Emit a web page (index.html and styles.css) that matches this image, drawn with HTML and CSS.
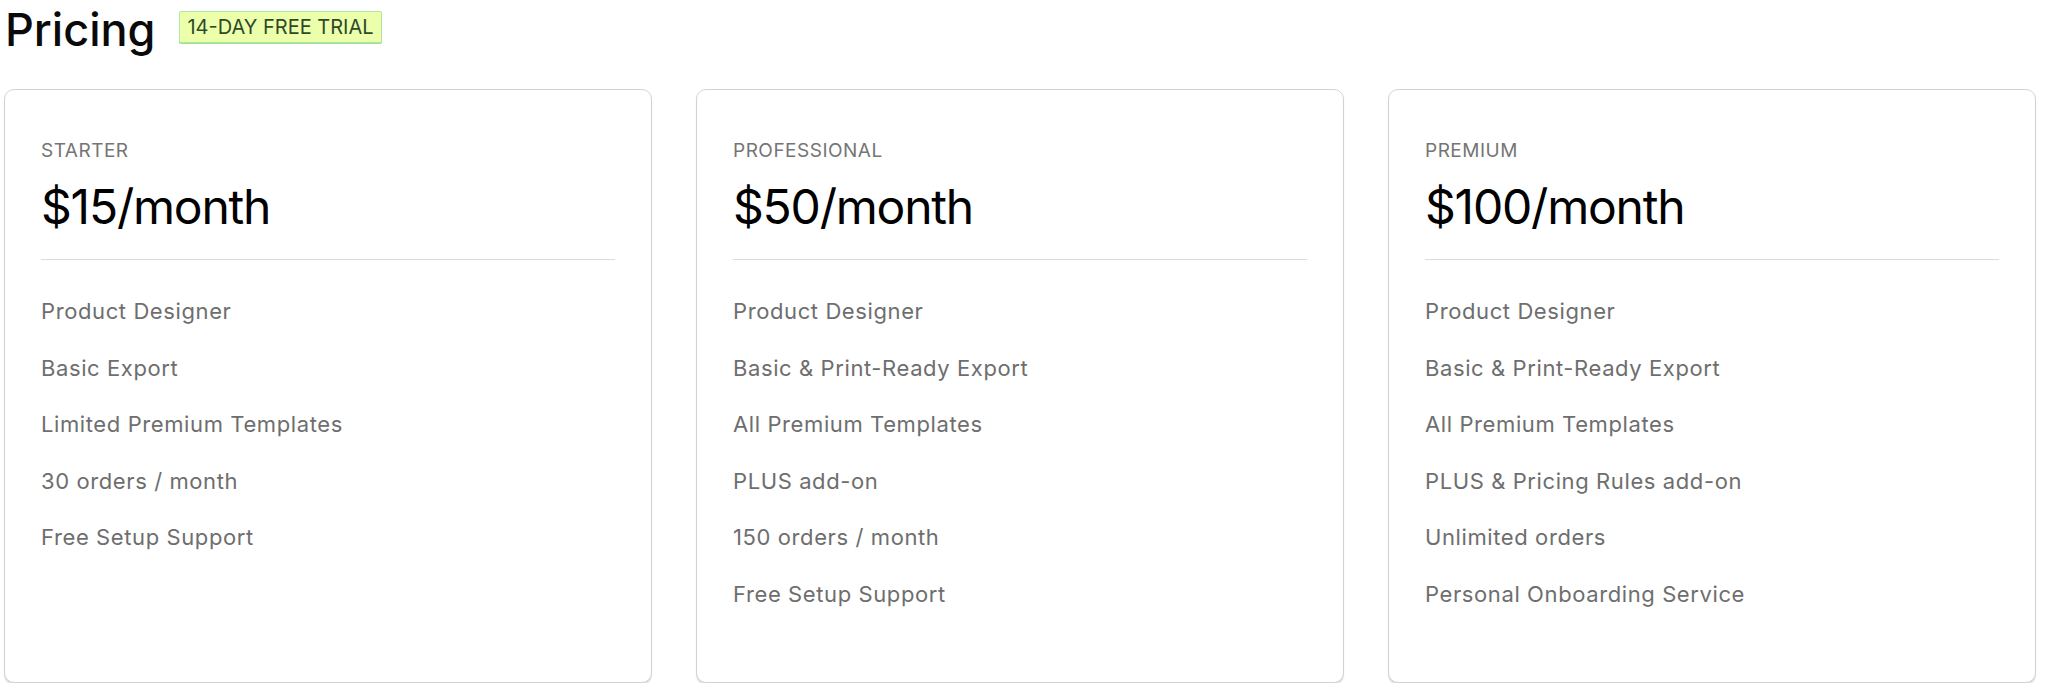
FILE: index.html
```html
<!DOCTYPE html>
<html>
<head>
<meta charset="utf-8">
<link rel="stylesheet" href="styles.css">
</head>
<body>
<div class="page">
  <div class="header">
    <h1 class="title">Pricing</h1>
    <span class="badge">14-DAY FREE TRIAL</span>
  </div>
  <div class="plans">
    <div class="card">
      <div class="plan-name">STARTER</div>
      <div class="price">$15/month</div>
      <hr class="divider">
      <ul class="features">
        <li>Product Designer</li>
        <li>Basic Export</li>
        <li>Limited Premium Templates</li>
        <li>30 orders / month</li>
        <li>Free Setup Support</li>
      </ul>
    </div>
    <div class="card">
      <div class="plan-name">PROFESSIONAL</div>
      <div class="price">$50/month</div>
      <hr class="divider">
      <ul class="features">
        <li>Product Designer</li>
        <li>Basic &amp; Print-Ready Export</li>
        <li>All Premium Templates</li>
        <li>PLUS add-on</li>
        <li>150 orders / month</li>
        <li>Free Setup Support</li>
      </ul>
    </div>
    <div class="card">
      <div class="plan-name">PREMIUM</div>
      <div class="price">$100/month</div>
      <hr class="divider">
      <ul class="features">
        <li>Product Designer</li>
        <li>Basic &amp; Print-Ready Export</li>
        <li>All Premium Templates</li>
        <li>PLUS &amp; Pricing Rules add-on</li>
        <li>Unlimited orders</li>
        <li>Personal Onboarding Service</li>
      </ul>
    </div>
  </div>
</div>
</body>
</html>
```
FILE: styles.css
```css
* { box-sizing: border-box; }
html, body { margin: 0; padding: 0; background: #fff; }
body { font-family: Inter, "Noto Sans", sans-serif; color: #000; }
.page { padding: 4px 14px 0 4px; }
.header { display: flex; align-items: center; gap: 24px; height: 50px; padding-left: 1px; }
.title { margin: 0; font-size: 45px; font-weight: 500; line-height: 1; letter-spacing: 0; color: #0a0a0a; }
.badge {
  display: inline-block;
  background: #ecffab;
  border: 1px solid #aee89c;
  box-shadow: 0 1px 0 #9ede96;
  color: #2f4a2a;
  font-size: 20px;
  line-height: 30px;
  padding: 0 7px;
  border-radius: 2px;
  margin-top: -4px;
}
.plans { display: flex; gap: 44px; margin-top: 35px; }
.card {
  width: 648px;
  flex: 0 0 648px;
  border: 1px solid #d2d2d2;
  border-radius: 10px;
  box-shadow: 0 2px 1px rgba(0,0,0,0.12);
  padding: 49px 36px 72px 36px;
  background: #fff;
}
.plan-name { font-size: 19px; line-height: 24px; color: #757575; letter-spacing: 0.5px; }
.price { font-size: 48px; line-height: 58px; margin-top: 15px; color: #000; letter-spacing: -1.2px; }
.divider { border: 0; border-top: 1px solid #dcdcdc; margin: 23px 0 35px; }
.features { list-style: none; margin: 0; padding: 0; display: flex; flex-direction: column; gap: 24.5px; }
.features li { font-size: 22px; line-height: 32px; color: #6e6e6e; letter-spacing: 0.6px; }
```
